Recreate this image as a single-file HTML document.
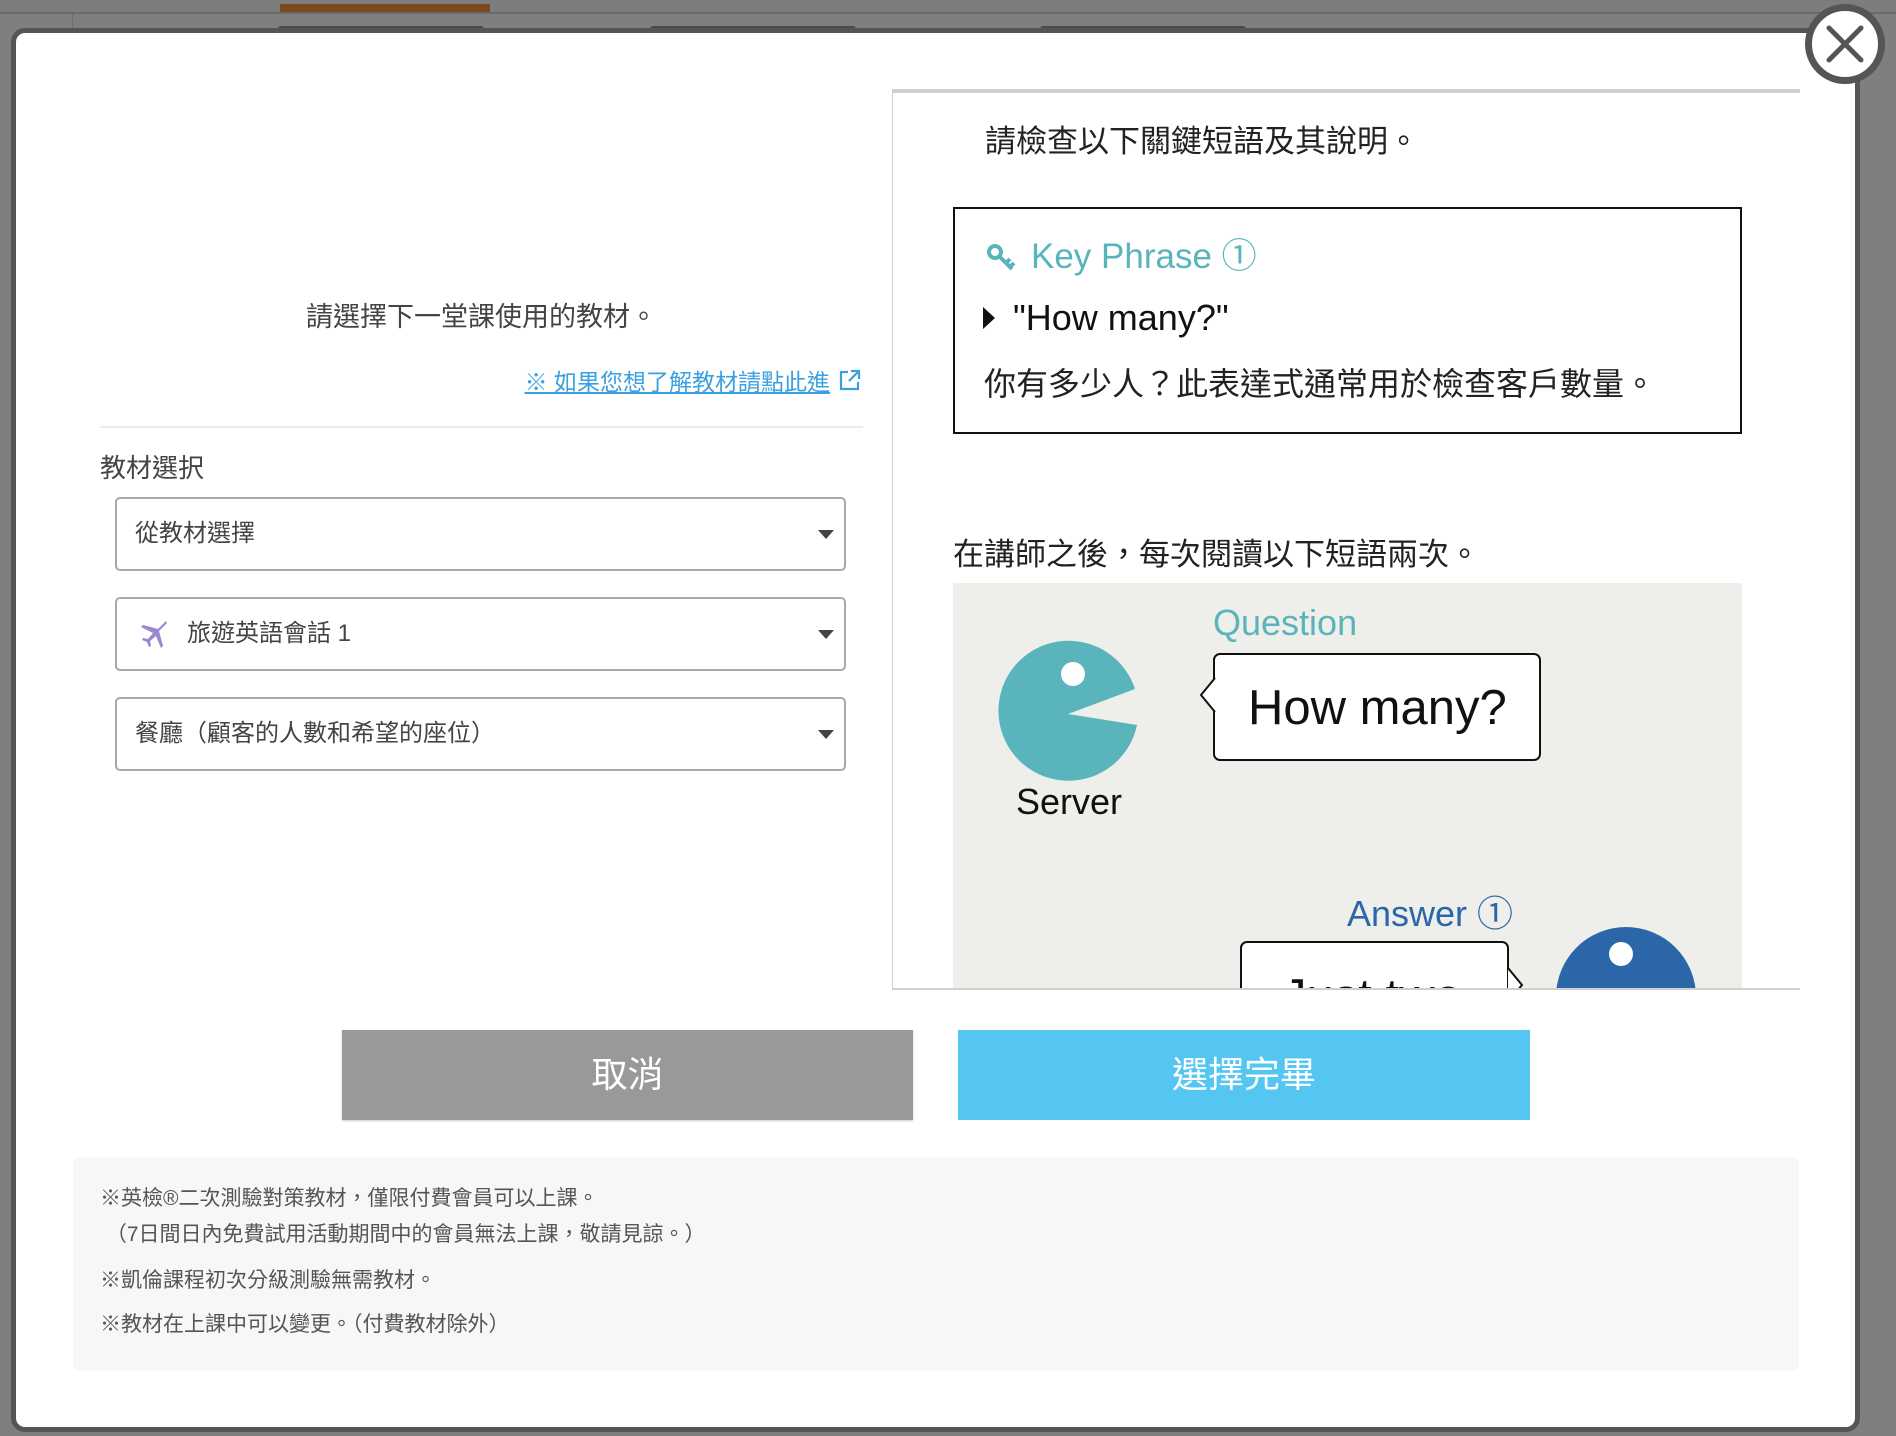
<!DOCTYPE html>
<html><head><meta charset="utf-8">
<style>
*{margin:0;padding:0;box-sizing:border-box}
html,body{width:1896px;height:1436px;overflow:hidden;background:#7f7f7f;font-family:"Liberation Sans","Noto Sans CJK TC",sans-serif}
.a{position:absolute;white-space:nowrap}
.sel{position:absolute;left:115px;width:731px;height:74px;border:2px solid #a8a8a8;border-radius:5px;background:#fff}
.sel .t{position:absolute;left:18px;top:0;line-height:70px;font-size:24px;color:#444}
.sel .c{position:absolute;right:10px;top:31px;width:0;height:0;border-left:8px solid transparent;border-right:8px solid transparent;border-top:9px solid #444}
.note{position:absolute;left:100px;font-size:21px;color:#555;line-height:26px}
</style></head><body>
<div class="a" style="left:0;top:0;width:1896px;height:14px;background:#7d7d7d;border-bottom:2px solid #6a6a6a"></div>
<div class="a" style="left:280px;top:4px;width:210px;height:8px;background:#7a4a1e"></div>
<div class="a" style="left:72px;top:14px;width:1px;height:20px;background:#6e6e6e"></div>
<div class="a" style="left:278px;top:26px;width:206px;height:8px;background:#4a4a4a;border-radius:3px 3px 0 0"></div>
<div class="a" style="left:650px;top:26px;width:206px;height:8px;background:#4a4a4a;border-radius:3px 3px 0 0"></div>
<div class="a" style="left:1040px;top:26px;width:206px;height:8px;background:#4a4a4a;border-radius:3px 3px 0 0"></div>
<!-- modal -->
<div class="a" style="left:11px;top:28px;width:1849px;height:1404px;background:#fff;border:5px solid #555;border-radius:14px"></div>

<div class="a" style="left:100px;width:763px;top:298px;text-align:center;font-size:27px;color:#444;line-height:38px">請選擇下一堂課使用的教材。</div>
<div class="a" style="right:1066px;top:366px;font-size:23px;color:#3aa0e0;line-height:32px;text-decoration:underline">※ 如果您想了解教材請點此進 </div>
<svg class="a" style="left:838px;top:368px" width="24" height="24" viewBox="0 0 24 24" fill="none" stroke="#3aa0e0" stroke-width="2.2"><path d="M10 4H3v17h17v-7"/><path d="M13 3h8v8M21 3l-10 10"/></svg>
<div class="a" style="left:100px;top:426px;width:763px;height:2px;background:#ececec"></div>
<div class="a" style="left:100px;top:450px;font-size:26px;color:#444;line-height:36px">教材選択</div>
<div class="sel" style="top:497px"><div class="t">從教材選擇</div><div class="c"></div></div>
<div class="sel" style="top:597px"><svg class="a" style="left:22px;top:20px" width="30" height="30" viewBox="0 0 30 30"><path d="M27 2 L19 10 L4 6 L2 8 L14 14 L9 20 L4 19 L3 21 L8 23 L10 28 L12 27 L11 22 L17 17 L22 29 L24 27 L20 12 L28 4 Z" fill="#9b87d0"/></svg><div class="t" style="left:70px">旅遊英語會話 1</div><div class="c"></div></div>
<div class="sel" style="top:697px"><div class="t">餐廳（顧客的人數和希望的座位）</div><div class="c"></div></div>

<!-- right panel -->
<div class="a" style="left:892px;top:89px;width:908px;height:901px;border-top:4px solid #cfcfcf;border-left:1px solid #cfcfcf;border-bottom:2px solid #cfcfcf;overflow:hidden;background:#fff">
  <div class="a" style="left:92px;top:28px;font-size:31px;color:#222;line-height:42px">請檢查以下關鍵短語及其說明。</div>
  <div class="a" style="left:60px;top:114px;width:789px;height:227px;border:2px solid #111"></div>
  <svg class="a" style="left:93px;top:148px" width="34" height="34" viewBox="0 0 34 34" fill="none" stroke="#5ab4bb" stroke-width="4"><circle cx="9" cy="11" r="6"/><path d="M13 15 L26 28 M20 22 L24 18 M24 26 L28 22"/></svg>
  <div class="a" style="left:138px;top:142px;font-size:35px;color:#5ab4bb;line-height:44px">Key Phrase ①</div>
  <div class="a" style="left:90px;top:214px;width:0;height:0;border-top:11px solid transparent;border-bottom:11px solid transparent;border-left:12px solid #111"></div>
  <div class="a" style="left:120px;top:203px;font-size:36px;color:#111;line-height:44px">"How many?"</div>
  <div class="a" style="left:91px;top:270px;font-size:32px;color:#222;line-height:42px">你有多少人？此表達式通常用於檢查客戶數量。</div>
  <div class="a" style="left:60px;top:441px;font-size:31px;color:#222;line-height:42px">在講師之後，每次閱讀以下短語兩次。</div>
  <div class="a" style="left:60px;top:490px;width:789px;height:420px;background:#eeeeea">
    <svg class="a" style="left:40px;top:56px" width="150" height="150" viewBox="0 0 150 150"><path d="M75 75 L142 50 A70 70 0 1 0 144 86 Z" fill="#5ab4bb"/><circle cx="80" cy="35" r="12" fill="#fff"/></svg>
    <div class="a" style="left:42px;top:197px;width:148px;text-align:center;font-size:36px;color:#111;line-height:44px">Server</div>
    <div class="a" style="left:260px;top:18px;font-size:36px;color:#5ab4bb;line-height:44px">Question</div>
    <div class="a" style="left:260px;top:70px;width:328px;height:108px;border:2px solid #111;border-radius:7px;background:#fff"></div>
    <svg class="a" style="left:246px;top:95px" width="18" height="34" viewBox="0 0 18 34"><path d="M16 0 L2 17 L16 34" fill="#fff" stroke="#111" stroke-width="2"/></svg>
    <div class="a" style="left:295px;top:95px;font-size:49px;color:#111;line-height:60px">How many?</div>
    <div class="a" style="left:394px;top:309px;font-size:36px;color:#2a66a8;line-height:44px">Answer ①</div>
    <div class="a" style="left:287px;top:358px;width:269px;height:100px;border:2px solid #111;border-radius:7px;background:#fff;overflow:hidden"><div style="position:absolute;left:40px;top:22px;font-size:49px;line-height:64px;color:#111">Just two</div></div>
    <svg class="a" style="left:555px;top:385px" width="18" height="34" viewBox="0 0 18 34"><path d="M0 0 L14 17 L0 34" fill="#fff" stroke="#111" stroke-width="2"/></svg>
    <svg class="a" style="left:598px;top:339px" width="150" height="150" viewBox="0 0 150 150"><circle cx="75" cy="75" r="70" fill="#2a66a8"/><circle cx="70" cy="32" r="12" fill="#fff"/></svg>
  </div>
</div>

<!-- buttons -->
<div class="a" style="left:342px;top:1030px;width:571px;height:90px;background:#999;color:#fff;font-size:36px;text-align:center;line-height:90px;box-shadow:0 1px 2px rgba(0,0,0,.2)">取消</div>
<div class="a" style="left:958px;top:1030px;width:572px;height:90px;background:#55c6f2;color:#fff;font-size:36px;text-align:center;line-height:90px">選擇完畢</div>

<div class="a" style="left:73px;top:1157px;width:1726px;height:214px;background:#f7f7f7;border-radius:8px"></div>
<div class="note" style="top:1186px">※英檢®二次測驗對策教材，僅限付費會員可以上課。</div>
<div class="note" style="top:1222px">&nbsp;（7日間日內免費試用活動期間中的會員無法上課，敬請見諒。）</div>
<div class="note" style="top:1268px">※凱倫課程初次分級測驗無需教材。</div>
<div class="note" style="top:1312px">※教材在上課中可以變更。（付費教材除外）</div>

<!-- close -->
<div class="a" style="left:1805px;top:4px;width:80px;height:80px;border-radius:50%;background:#fff;border:7px solid #555"></div>
<svg class="a" style="left:1825px;top:24px" width="40" height="40" viewBox="0 0 40 40" stroke="#555" stroke-width="5" stroke-linecap="round"><path d="M4 4 L36 36 M36 4 L4 36"/></svg>
</body></html>
